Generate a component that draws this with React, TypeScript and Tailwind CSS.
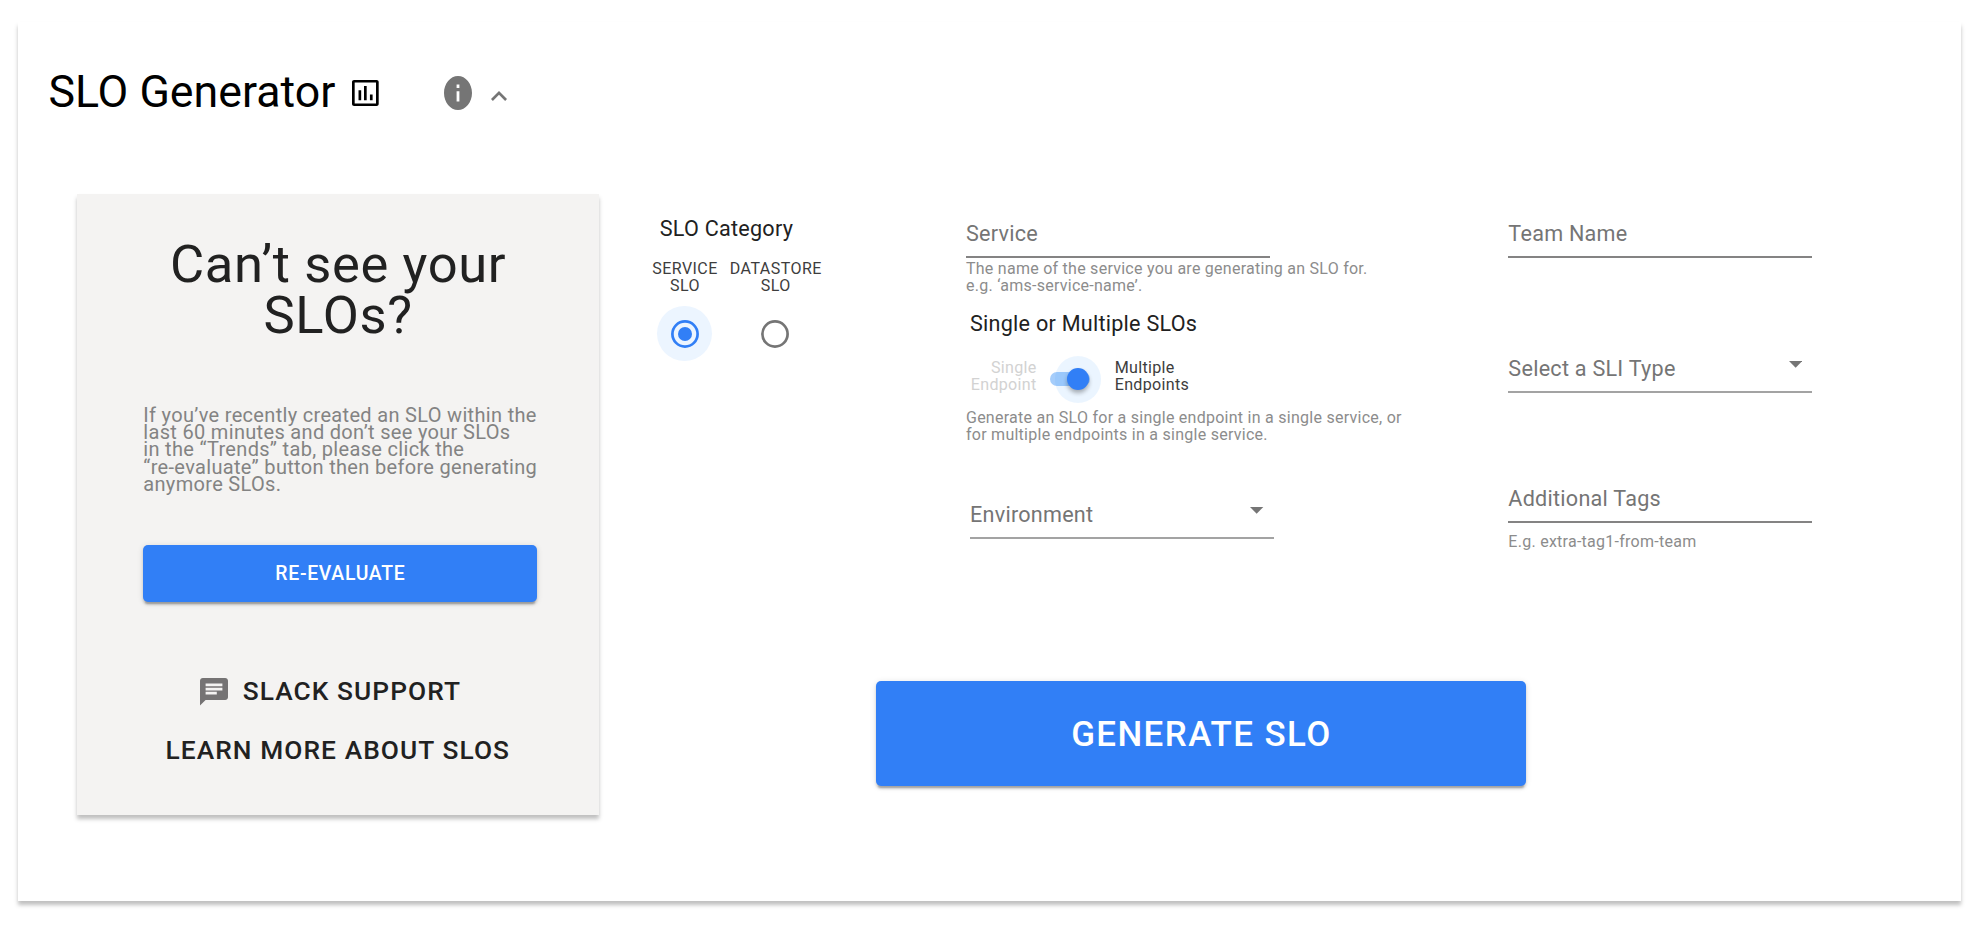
import type { ReactNode } from "react";

function ChartIcon() {
  return (
    <svg viewBox="0 0 18 18" preserveAspectRatio="none" className="h-[26px] w-[26.7px] text-black" fill="currentColor">
      <path
        fillRule="evenodd"
        d="M1.4 0h15.2C17.4 0 18 .6 18 1.4v15.2c0 .8-.6 1.4-1.4 1.4H1.4C.6 18 0 17.4 0 16.6V1.4C0 .6.6 0 1.4 0zM1.8 1.7v14.6h14.4V1.7z"
      />
      <path d="M4.4 7.1h1.8V14H4.4zM8.1 4.1h1.8V14H8.1zM12.1 10.1h1.8V14h-1.8z" />
    </svg>
  );
}

function InfoIcon() {
  return (
    <svg viewBox="2 2 20 20" preserveAspectRatio="none" className="h-[34px] w-[28px] text-[#757575]" fill="currentColor">
      <path d="M12 2C6.48 2 2 6.48 2 12s4.48 10 10 10 10-4.48 10-10S17.52 2 12 2zm1 15h-2v-6h2v6zm0-8h-2V7h2v2z" />
    </svg>
  );
}

function CollapseIcon() {
  return (
    <svg viewBox="6 8 12 7.41" className="h-[10px] w-4 text-[#757575]" fill="currentColor">
      <path d="M12 8l-6 6 1.41 1.41L12 10.83l4.59 4.58L18 14z" />
    </svg>
  );
}

function ChatIcon() {
  return (
    <svg viewBox="2 2 20 20" preserveAspectRatio="none" className="h-[27.5px] w-[28px] text-[#757374]" fill="currentColor">
      <path d="M20 2H4c-1.1 0-1.99.9-1.99 2L2 22l4-4h14c1.1 0 2-.9 2-2V4c0-1.1-.9-2-2-2zM6 9h12v2H6V9zm8 5H6v-2h8v2zm4-6H6V6h12v2z" />
    </svg>
  );
}

function TextField({ label }: { label: string }) {
  return (
    <div className="w-[303.6px]">
      <div className="h-[34.4px] text-[21.6px] leading-6 tracking-[0.25px] text-[#757575]">{label}</div>
      <div className="h-[2px] bg-[#848383]" />
    </div>
  );
}

function SelectField({ label }: { label: string }) {
  return (
    <div className="w-[303.6px]">
      <div className="flex h-[34.4px] justify-between pr-[10px] text-[21.6px] leading-6 tracking-[0.25px] text-[#757575]">
        <span className="pt-[0.5px]">{label}</span>
        <svg viewBox="0 0 10 5" preserveAspectRatio="none" className="mt-[4.3px] h-[6.7px] w-[13.3px]" fill="currentColor">
          <path d="M0 0h10L5 5z" />
        </svg>
      </div>
      <div className="h-[2px] bg-[#a3a3a3]" />
    </div>
  );
}

function HelperText({ children }: { children: ReactNode }) {
  return <p className="whitespace-nowrap text-[16px] leading-[16.7px] tracking-[0.26px] text-[#8c8c8c]">{children}</p>;
}

function RadioOption({ name, checked }: { name: string; checked?: boolean }) {
  return (
    <div className="flex flex-col items-center text-center text-[16px] leading-[16.7px] tracking-[0.45px] text-[#3d3d3d]">
      <span>{name}</span>
      <span>SLO</span>
      {checked ? (
        <div className="mt-[11.6px] mr-[0.8px] flex size-[55.4px] items-center justify-center rounded-full bg-[#ecf5ff]">
          <svg viewBox="0 0 28 28" className="size-7 text-[#317ff6]">
            <circle cx="14" cy="14" r="12.6" fill="none" stroke="currentColor" strokeWidth="2.7" />
            <circle cx="14" cy="14" r="7" fill="currentColor" />
          </svg>
        </div>
      ) : (
        <div className="mt-[11.6px] mr-[0.6px] flex size-[55.4px] items-center justify-center">
          <svg viewBox="0 0 28 28" className="size-7 text-[#757575]">
            <circle cx="14" cy="14" r="12.6" fill="none" stroke="currentColor" strokeWidth="2.7" />
          </svg>
        </div>
      )}
    </div>
  );
}

function EndpointSwitch() {
  return (
    <div className="relative h-[46.7px] w-[54.4px]">
      <div className="absolute top-[16.3px] left-[3px] h-[14px] w-[40px] rounded-full bg-[#a5cdfb]" />
      <div className="absolute top-0 right-0 flex size-[46.7px] items-center justify-center rounded-full bg-[#3d9aff]/[0.1]">
        <div className="size-[22px] rounded-full bg-[#317ff6] shadow-[0_3px_4px_rgba(0,0,0,0.3)]" />
      </div>
    </div>
  );
}

export default function App() {
  return (
    <div className="flex h-[926px] w-[1978px] overflow-hidden bg-white pt-[22px] pl-[17.6px] font-[Roboto,sans-serif]">
      <main className="flex h-[878.6px] w-[1943.4px] flex-col bg-white shadow-[0_4px_4px_rgba(0,0,0,0.25)]">
        <header className="flex h-[172px] pt-[39.7px] pl-[30.8px]">
          <h1 className="w-[303.6px] text-[44.7px] leading-[60px] whitespace-nowrap text-black">SLO Generator</h1>
          <div className="pt-[18px]">
            <ChartIcon />
          </div>
          <div className="ml-[65.3px] pt-[14.3px]">
            <InfoIcon />
          </div>
          <div className="ml-[19.3px] pt-[29px]">
            <CollapseIcon />
          </div>
        </header>

        <div className="flex pl-[59.4px]">
          <aside className="flex h-[621px] w-[521.6px] flex-col items-center bg-[#f4f3f2] pt-[44.6px] text-[#212121] shadow-[0_4px_4px_rgba(0,0,0,0.25)]">
            <h2 className="pl-[0.6px] text-center text-[52.5px] leading-[51.5px] tracking-[0.65px]">
              Can’t see your
              <br />
              SLOs?
            </h2>
            <p className="mt-[65.2px] ml-[5px] w-[394px] text-[20px] leading-[17.33px] tracking-[0.32px] whitespace-nowrap text-[#838383]">
              If you’ve recently created an SLO within the
              <br />
              last 60 minutes and don’t see your SLOs
              <br />
              in the “Trends” tab, please click the
              <br />
              “re-evaluate” button then before generating
              <br />
              anymore SLOs.
            </p>
            <button className="mt-[51.2px] ml-[4.5px] h-[57px] w-[394px] rounded-[5px] bg-[#317ff6] pt-[1.4px] pl-[0.7px] text-[19.4px] font-medium tracking-[0.7px] text-white shadow-[0_4px_1.5px_-2.5px_rgba(0,0,0,0.2),0_2.5px_2.5px_rgba(0,0,0,0.14),0_1px_6px_rgba(0,0,0,0.12)]">
              RE-EVALUATE
            </button>
            <a className="mt-[73.5px] flex w-full pl-[122.7px] text-[26.3px] leading-[32px] font-medium tracking-[1.08px]">
              <span className="pt-[2.9px]">
                <ChatIcon />
              </span>
              <span className="ml-[15px]">SLACK SUPPORT</span>
            </a>
            <a className="mt-[27px] text-[26.3px] leading-[32px] font-medium tracking-[1.08px]">LEARN MORE ABOUT SLOS</a>
          </aside>

          <section className="flex flex-col">
            <div className="flex h-[487px]">
              <div className="w-[367.4px] pt-[23px] pl-[53.7px]">
                <h3 className="pl-[7.4px] text-[21.6px] leading-6 tracking-[0.25px] text-[#212121]">SLO Category</h3>
                <div className="mt-5 flex gap-3">
                  <RadioOption name="SERVICE" checked />
                  <RadioOption name="DATASTORE" />
                </div>
              </div>

              <div className="w-[542.4px] pt-[27.6px]">
                <TextField label="Service" />
                <div className="mt-[3px]">
                  <HelperText>
                    The name of the service you are generating an SLO for.
                    <br />
                    e.g. ‘ams-service-name’.
                  </HelperText>
                </div>
                <h3 className="mt-[17.7px] pl-1 text-[21.6px] leading-6 tracking-[0.25px] text-[#212121]">
                  Single or Multiple SLOs
                </h3>
                <div className="mt-[19.8px] flex items-center text-[16.1px] leading-[16.7px] tracking-[0.3px]">
                  <div className="w-[70.6px] pb-[4.2px] text-right text-[#d2d2d2]">
                    Single
                    <br />
                    Endpoint
                  </div>
                  <div className="ml-[10.4px]">
                    <EndpointSwitch />
                  </div>
                  <div className="ml-[13.4px] pb-[4.2px] text-[#3d3d3d]">
                    Multiple
                    <br />
                    Endpoints
                  </div>
                </div>
                <div className="mt-[7.5px]">
                  <HelperText>
                    Generate an SLO for a single endpoint in a single service, or
                    <br />
                    for multiple endpoints in a single service.
                  </HelperText>
                </div>
                <div className="mt-[59.4px] pl-1">
                  <SelectField label="Environment" />
                </div>
              </div>

              <div className="pt-[27.6px]">
                <TextField label="Team Name" />
                <div className="mt-[98.6px]">
                  <SelectField label="Select a SLI Type" />
                </div>
                <div className="mt-[93.9px]">
                  <TextField label="Additional Tags" />
                </div>
                <div className="mt-[10.8px]">
                  <HelperText>E.g. extra-tag1-from-team</HelperText>
                </div>
              </div>
            </div>

            <button className="ml-[277.4px] h-[105px] w-[650px] rounded-[5px] bg-[#317ff6] pt-[2.5px] pl-[0.8px] text-[34.9px] font-medium tracking-[1.42px] text-white shadow-[0_4px_1.5px_-2.5px_rgba(0,0,0,0.2),0_2.5px_2.5px_rgba(0,0,0,0.14),0_1px_6px_rgba(0,0,0,0.12)]">
              GENERATE SLO
            </button>
          </section>
        </div>
      </main>
    </div>
  );
}
